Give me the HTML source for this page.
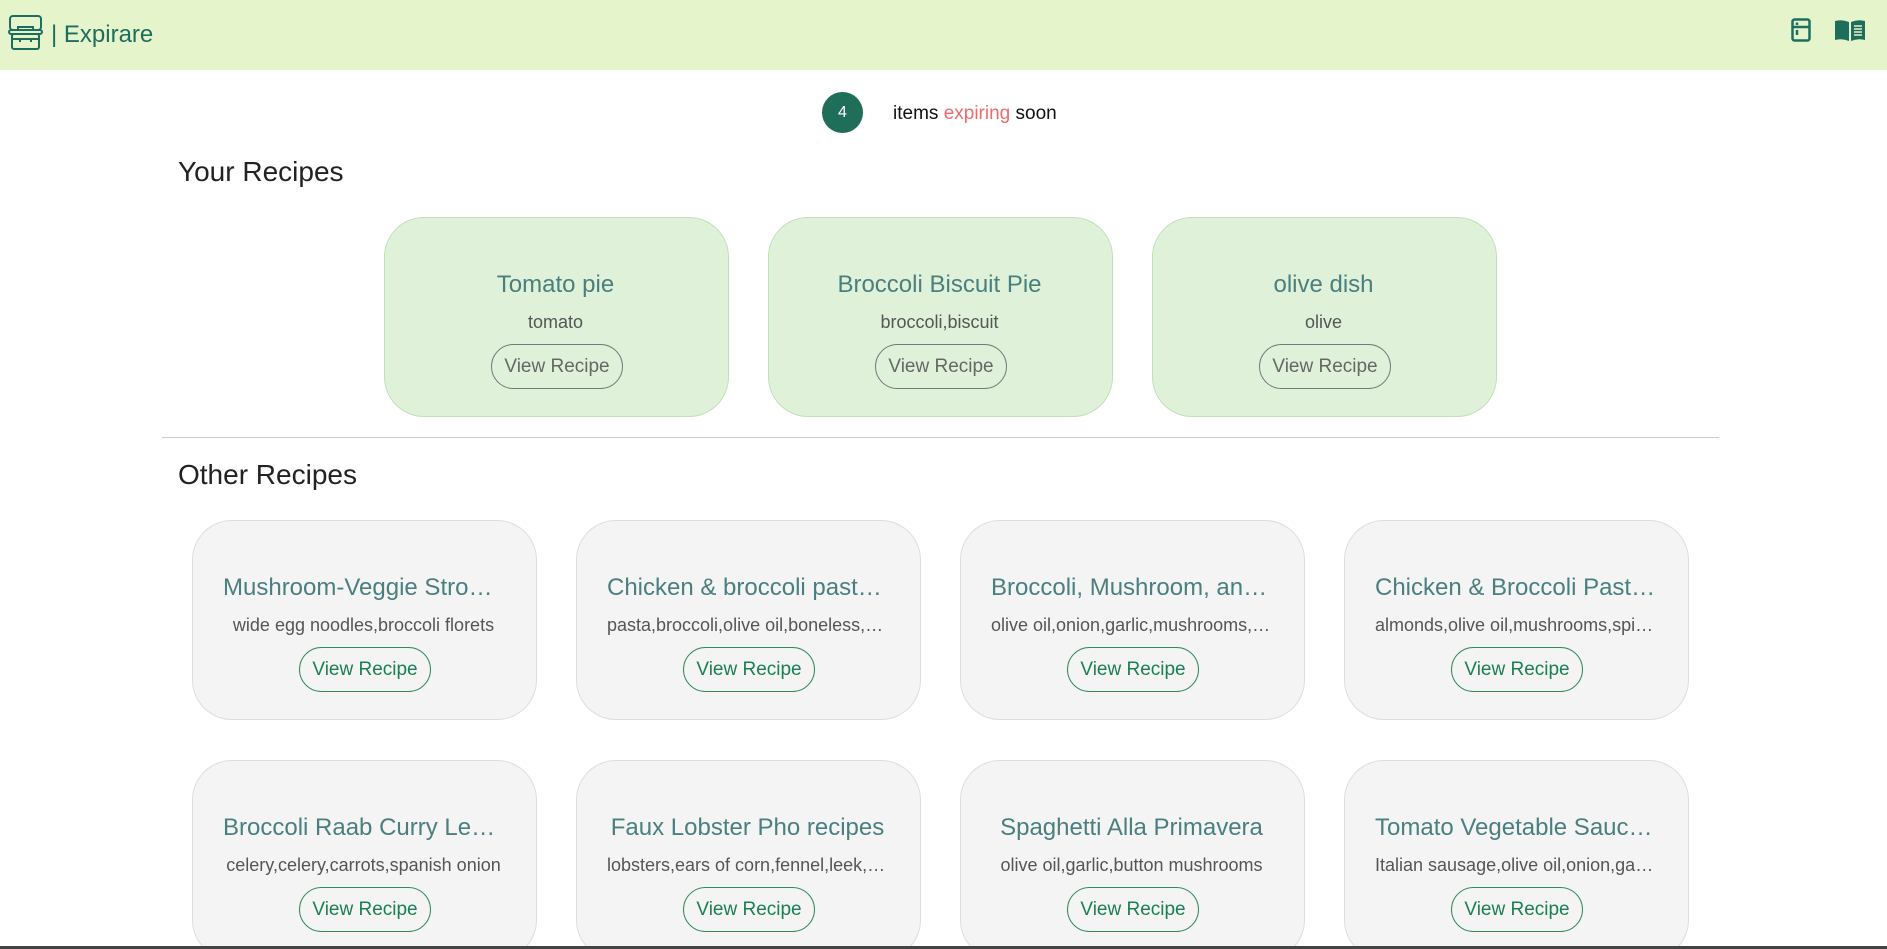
<!DOCTYPE html>
<html><head><meta charset="utf-8"><style>
*{box-sizing:border-box;margin:0;padding:0}
html,body{width:1887px;height:949px;overflow:hidden}
body{background:#fff;font-family:"Liberation Sans","DejaVu Sans",sans-serif;position:relative}
#wrap{position:absolute;left:0;top:0;width:1887px;height:949px;overflow:hidden}
.hdr{position:absolute;left:0;top:0;width:1887px;height:70px;background:#e6f4cc}
.logo{position:absolute;left:8px;top:15px}
.brand{position:absolute;left:51px;top:21px;font-size:24px;color:#1e6e5e}
.badge{position:absolute;left:822px;top:92px;width:41px;height:41px;border-radius:50%;background:#1e6e5a;color:#fff;font-size:16px;text-align:center;line-height:41px}
.exp{position:absolute;left:893px;top:103px;font-size:19px;color:#111}
.exp span{color:#f06a6a}
h2{position:absolute;left:178px;font-weight:normal;font-size:28px;color:#222}
hr{position:absolute;left:162px;top:437px;width:1557px;border:0;border-top:1px solid #ccc}
.card{position:absolute;width:345px;height:200px;border-radius:40px;text-align:center;overflow:hidden}
.g{background:#dff2d9;border:1px solid #bfe0bb}
.o{background:#f4f4f4;border:1px solid #ddd}
.t{position:absolute;left:30px;right:32px;top:53px;font-size:24px;color:#4a7f7f;white-space:nowrap;overflow:hidden;text-overflow:ellipsis}
.i{position:absolute;left:30px;right:32px;top:94px;font-size:18px;color:#555;white-space:nowrap;overflow:hidden;text-overflow:ellipsis}
.b{position:absolute;left:106px;top:126px;width:132px;height:45px;border-radius:23px;font-size:19px;line-height:43px}
.g .b{border:1px solid #777;color:#666}
.o .b{border:1px solid #2b8a5a;color:#1a8050}
.bar{position:absolute;left:0;top:946px;width:1887px;height:3px;background:#444}
</style></head><body><div id="wrap">
<div class="hdr">
<svg class="logo" width="36" height="36" viewBox="0 0 36 36" fill="none" stroke="#1e6e5e" stroke-width="2"><rect x="2" y="1" width="31" height="14" rx="3"/><rect x="1" y="15" width="33" height="4" rx="2"/><path d="M10 15v-3h15v3"/><rect x="4" y="19" width="27" height="15" rx="2"/><path d="M4 24h27M12 24v3M23 24v3"/></svg>
<div class="brand">| Expirare</div>
<svg style="position:absolute;left:1791px;top:18px" width="20" height="24" viewBox="0 0 20 24" fill="none" stroke="#1e6e5e" stroke-width="2.5"><rect x="1.5" y="1.5" width="17" height="21" rx="2"/><path d="M1.5 9h17M6 4.5v2.5M6 12v5"/></svg>
<svg style="position:absolute;left:1835px;top:19px" width="30" height="22" viewBox="0 0 30 22"><path d="M0 2q7-2 14 1v19q-7-3-14-1z" fill="#1e6e5e"/><path d="M16 3q7-3 14-1v19q-7-2-14 1z" fill="#1e6e5e"/><path d="M19 7h8M19 10h8M19 13h8M19 16h8" stroke="#e6f4cc" stroke-width="1.5"/></svg>
</div>
<div class="badge">4</div>
<div class="exp">items <span>expiring</span> soon</div>
<h2 style="top:156px">Your Recipes</h2>
<div class="card g" style="left:384px;top:217px"><div class="t">Tomato pie</div><div class="i">tomato</div><div class="b">View Recipe</div></div>
<div class="card g" style="left:768px;top:217px"><div class="t">Broccoli Biscuit Pie</div><div class="i">broccoli,biscuit</div><div class="b">View Recipe</div></div>
<div class="card g" style="left:1152px;top:217px"><div class="t">olive dish</div><div class="i">olive</div><div class="b">View Recipe</div></div>
<hr>
<h2 style="top:459px">Other Recipes</h2>
<div class="card o" style="left:192px;top:520px"><div class="t">Mushroom-Veggie Stroganoff</div><div class="i">wide egg noodles,broccoli florets</div><div class="b">View Recipe</div></div>
<div class="card o" style="left:576px;top:520px"><div class="t">Chicken &amp; broccoli pasta bake</div><div class="i">pasta,broccoli,olive oil,boneless,chicken</div><div class="b">View Recipe</div></div>
<div class="card o" style="left:960px;top:520px"><div class="t">Broccoli, Mushroom, and Rice</div><div class="i">olive oil,onion,garlic,mushrooms,rice</div><div class="b">View Recipe</div></div>
<div class="card o" style="left:1344px;top:520px"><div class="t">Chicken &amp; Broccoli Pasta Bake</div><div class="i">almonds,olive oil,mushrooms,spinach</div><div class="b">View Recipe</div></div>
<div class="card o" style="left:192px;top:760px"><div class="t">Broccoli Raab Curry Lentils</div><div class="i">celery,celery,carrots,spanish onion</div><div class="b">View Recipe</div></div>
<div class="card o" style="left:576px;top:760px"><div class="t">Faux Lobster Pho recipes</div><div class="i">lobsters,ears of corn,fennel,leek,onion</div><div class="b">View Recipe</div></div>
<div class="card o" style="left:960px;top:760px"><div class="t">Spaghetti Alla Primavera</div><div class="i">olive oil,garlic,button mushrooms</div><div class="b">View Recipe</div></div>
<div class="card o" style="left:1344px;top:760px"><div class="t">Tomato Vegetable Sauce with</div><div class="i">Italian sausage,olive oil,onion,garlic</div><div class="b">View Recipe</div></div>
<div class="bar"></div>
</div></body></html>
